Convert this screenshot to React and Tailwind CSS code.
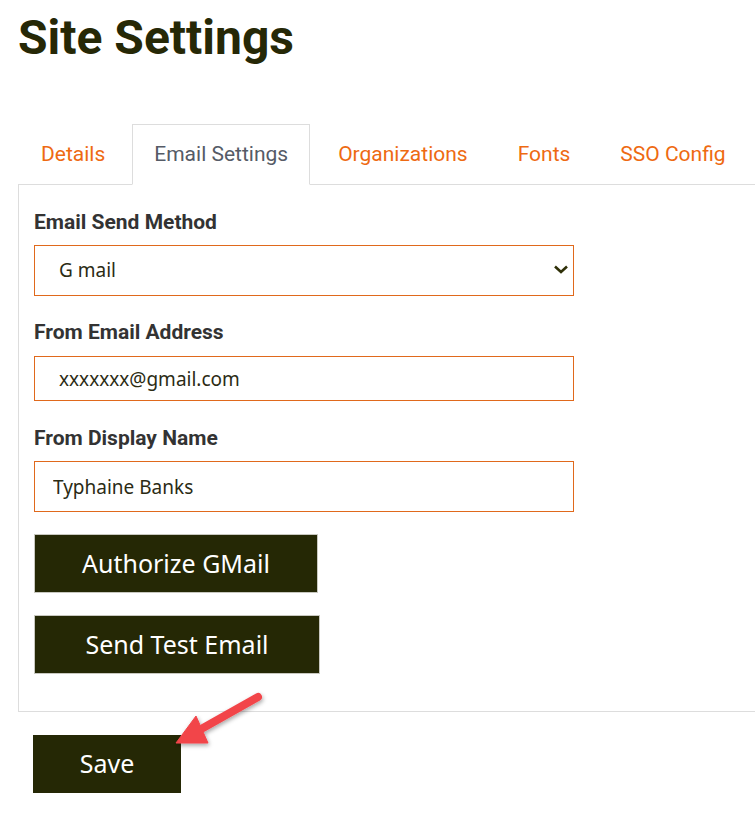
import { useState } from "react";

const tabs = ["Details", "Email Settings", "Organizations", "Fonts", "SSO Config"];

export default function App() {
  const [active, setActive] = useState("Email Settings");
  const [method, setMethod] = useState("gmail");
  const [fromEmail, setFromEmail] = useState("xxxxxxx@gmail.com");
  const [displayName, setDisplayName] = useState("Typhaine Banks");

  return (
    <div className="relative h-[834px] w-[755px] overflow-hidden bg-white font-['Roboto',sans-serif]">
      <h1 className="ml-[18px] pt-[14px] text-[48px] font-bold leading-none text-[#262806]">Site Settings</h1>

      <div className="ml-[18px] mt-[62px] w-[800px]">
        <div className="flex items-end border-b border-[#dddddd]">
          {tabs.map((tab) => (
            <button
              key={tab}
              type="button"
              onClick={() => setActive(tab)}
              className={
                tab === active
                  ? "-mb-px mr-[5px] flex h-[61px] items-center border border-[#dddddd] border-b-white bg-white px-[21px] text-[21px] leading-none text-[#555b66]"
                  : "mr-[4px] flex h-[60px] items-center px-[23px] text-[21px] leading-none text-[#ee6a12]"
              }
            >
              {tab}
            </button>
          ))}
        </div>

        <div className="border-x border-b border-[#dddddd] pb-[37px] pl-[15px] pt-[27px]">
          <label className="block text-[21px] font-bold leading-none text-[#333333]">Email Send Method</label>
          <div className="relative mt-[12px] w-[540px]">
            <select
              value={method}
              onChange={(event) => setMethod(event.target.value)}
              className="h-[51px] w-full appearance-none border border-[#e0691c] bg-white pl-[24px] font-['Noto_Sans',sans-serif] text-[19px] text-[#2b2b14] outline-none"
            >
              <option value="gmail">G mail</option>
              <option value="smtp">SMTP</option>
            </select>
            <svg className="pointer-events-none absolute right-[5px] top-[19px]" width="16" height="11" viewBox="0 0 16 11" fill="none">
              <path d="M2 2.5 L8 8 L14 2.5" stroke="#2f3008" strokeWidth="2.6" />
            </svg>
          </div>

          <label className="mt-[26px] block text-[21px] font-bold leading-none text-[#333333]">From Email Address</label>
          <input
            value={fromEmail}
            onChange={(event) => setFromEmail(event.target.value)}
            className="mt-[13px] block h-[45px] w-[540px] border border-[#e0691c] bg-white pl-[24px] font-['Noto_Sans',sans-serif] text-[19px] text-[#2b2b14] outline-none"
          />

          <label className="mt-[27px] block text-[21px] font-bold leading-none text-[#333333]">From Display Name</label>
          <input
            value={displayName}
            onChange={(event) => setDisplayName(event.target.value)}
            className="mt-[12px] block h-[51px] w-[540px] border border-[#e0691c] bg-white pl-[18px] font-['Noto_Sans',sans-serif] text-[19px] text-[#2b2b14] outline-none"
          />

          <button type="button" className="mt-[22px] block h-[59px] w-[284px] border border-[#c8c8c0] bg-[#252805] font-['Noto_Sans',sans-serif] text-[25px] text-white">
            Authorize GMail
          </button>
          <button type="button" className="mt-[22px] block h-[59px] w-[286px] border border-[#c8c8c0] bg-[#252805] font-['Noto_Sans',sans-serif] text-[25px] text-white">
            Send Test Email
          </button>
        </div>

        <button type="button" className="ml-[15px] mt-[23px] block h-[58px] w-[148px] bg-[#252805] font-['Noto_Sans',sans-serif] text-[25px] text-white">
          Save
        </button>
      </div>

      <svg className="pointer-events-none absolute left-0 top-0" width="755" height="834" viewBox="0 0 755 834">
        <defs>
          <filter id="arrowShadow" x="-20%" y="-20%" width="140%" height="140%">
            <feDropShadow dx="1" dy="2" stdDeviation="2" floodColor="#000" floodOpacity="0.35" />
          </filter>
        </defs>
        <g filter="url(#arrowShadow)" fill="#f2454a" stroke="#f2454a">
          <line x1="258" y1="697" x2="203" y2="728" strokeWidth="8" strokeLinecap="round" />
          <polygon points="176,743 196,716 208,743" strokeWidth="1" strokeLinejoin="round" />
        </g>
      </svg>
    </div>
  );
}
